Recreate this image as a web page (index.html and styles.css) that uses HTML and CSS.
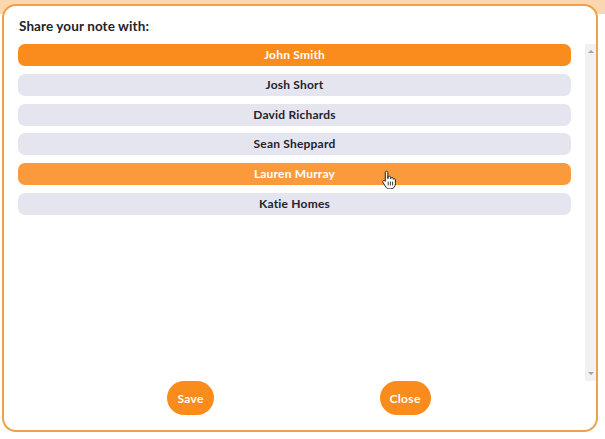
FILE: index.html
```html
<!DOCTYPE html>
<html lang="en">

<head>
    <meta charset="utf-8" />
    <meta name="viewport" content="width=device-width, initial-scale=1">
    <title>Share note</title>
    <link rel="stylesheet" href="styles.css">
</head>

<body>
    <div class="modal">
        <h2 class="title">Share your note with:</h2>
        <div class="content">
            <ul class="people">
                <li class="person selected">John Smith</li>
                <li class="person">Josh Short</li>
                <li class="person">David Richards</li>
                <li class="person">Sean Sheppard</li>
                <li class="person hover">Lauren Murray
                    <svg class="cursor" width="14" height="19" viewBox="0 0 14 19">
                        <path d="M4.5 1.2c.8 0 1.3.6 1.3 1.3v6.1l.4-.1V7.3c0-.7.6-1.2 1.2-1.2s1.2.5 1.2 1.2v1.2h.3c.1-.6.6-1 1.2-1 .7 0 1.2.5 1.2 1.2v.6c.2-.4.6-.6 1-.6.7 0 1.1.5 1.1 1.2v3.8c0 2.9-1.9 5.2-4.8 5.2H7.3c-1.4 0-2.6-.7-3.4-1.8L1 12.4c-.4-.6-.2-1.3.3-1.7.6-.4 1.3-.2 1.700.3l.3.4V2.5c0-.7.5-1.3 1.2-1.3z" fill="#fff" stroke="#222" stroke-width="1" stroke-linejoin="round" />
                        <path d="M6.2 12v3M8.4 12v3M10.6 12v3" stroke="#222" stroke-width=".9" stroke-linecap="round" />
                    </svg>
                </li>
                <li class="person">Katie Homes</li>
            </ul>
            <div class="scrollbar">
                <span class="arrow up"></span>
                <span class="arrow down"></span>
            </div>
        </div>
        <div class="actions">
            <button class="btn">Save</button>
            <button class="btn">Close</button>
        </div>
    </div>
</body>

</html>
```

FILE: styles.css
```css
:root {
    --orange: #fa8c1e;
    --orange-l: #fb9a3c;
    --border: #eba24a;
    --row-bg: #e4e5ef;
    --text: #23232b;
}

body {
    margin: 0;
    width: 605px;
    height: 439px;
    font-family: Lato, "Open Sans", sans-serif;
    color: var(--text);
    background: linear-gradient(#fcd6ae 0, #fcd6ae 14px, #ffffff 14px);
}

.modal {
    box-sizing: border-box;
    margin: 4px 0 0 2px;
    width: 596px;
    height: 428px;
    background: #fff;
    border: 2px solid var(--border);
    border-radius: 14px;
    padding: 0 0 0 14px;
    display: flex;
    flex-direction: column;
}

.title {
    font-size: 13.5px;
    font-weight: 700;
    letter-spacing: 0.1px;
    margin: 11px 0 0 1px;
    line-height: 18px;
    height: 27px;
}

.content {
    display: flex;
    gap: 14px;
    height: 337px;
}

.people {
    list-style: none;
    margin: 0;
    padding: 0;
    flex: 1;
    display: flex;
    flex-direction: column;
    gap: 7.8px;
}

.person {
    position: relative;
    height: 22px;
    line-height: 22px;
    border-radius: 7px;
    background: var(--row-bg);
    text-align: center;
    font-size: 12px;
    font-weight: 700;
    letter-spacing: 0.2px;
}

.person.selected {
    background: var(--orange);
    color: #fff;
}

.person.hover {
    background: var(--orange-l);
    color: #fff;
}

.cursor {
    position: absolute;
    left: 364px;
    top: 7px;
}

.scrollbar {
    position: relative;
    width: 11px;
    background: #f1f1f1;
}

.arrow {
    position: absolute;
    left: 3px;
    width: 0;
    height: 0;
    border-left: 3px solid transparent;
    border-right: 3px solid transparent;
}

.arrow.up {
    top: 6px;
    border-bottom: 3px solid #a3a3a3;
}

.arrow.down {
    bottom: 6px;
    border-top: 3px solid #a3a3a3;
}

.actions {
    display: flex;
    justify-content: center;
    gap: 166px;
    margin-left: -14px;
    padding-right: 2px;
}

.btn {
    height: 34px;
    padding: 0 10px;
    border: 0;
    border-radius: 17px;
    background: var(--orange);
    color: #fff;
    font-family: Lato, "Open Sans", sans-serif;
    font-size: 12px;
    font-weight: 700;
    letter-spacing: 0.3px;
}
```
